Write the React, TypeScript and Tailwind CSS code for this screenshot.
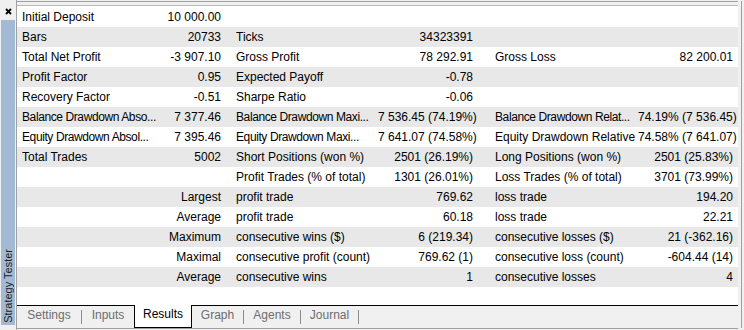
type Pair = [string, string];

type Row = {
  a?: Pair;
  sub?: string;
  b?: Pair;
  c?: Pair;
};

const rows: Row[] = [
  { a: ["Initial Deposit", "10 000.00"] },
  { a: ["Bars", "20733"], b: ["Ticks", "34323391"] },
  { a: ["Total Net Profit", "-3 907.10"], b: ["Gross Profit", "78 292.91"], c: ["Gross Loss", "82 200.01"] },
  { a: ["Profit Factor", "0.95"], b: ["Expected Payoff", "-0.78"] },
  { a: ["Recovery Factor", "-0.51"], b: ["Sharpe Ratio", "-0.06"] },
  {
    a: ["Balance Drawdown Abso...", "7 377.46"],
    b: ["Balance Drawdown Maxi...", "7 536.45 (74.19%)"],
    c: ["Balance Drawdown Relat...", "74.19% (7 536.45)"],
  },
  {
    a: ["Equity Drawdown Absol...", "7 395.46"],
    b: ["Equity Drawdown Maxi...", "7 641.07 (74.58%)"],
    c: ["Equity Drawdown Relative", "74.58% (7 641.07)"],
  },
  {
    a: ["Total Trades", "5002"],
    b: ["Short Positions (won %)", "2501 (26.19%)"],
    c: ["Long Positions (won %)", "2501 (25.83%)"],
  },
  { b: ["Profit Trades (% of total)", "1301 (26.01%)"], c: ["Loss Trades (% of total)", "3701 (73.99%)"] },
  { sub: "Largest", b: ["profit trade", "769.62"], c: ["loss trade", "194.20"] },
  { sub: "Average", b: ["profit trade", "60.18"], c: ["loss trade", "22.21"] },
  { sub: "Maximum", b: ["consecutive wins ($)", "6 (219.34)"], c: ["consecutive losses ($)", "21 (-362.16)"] },
  { sub: "Maximal", b: ["consecutive profit (count)", "769.62 (1)"], c: ["consecutive loss (count)", "-604.44 (14)"] },
  { sub: "Average", b: ["consecutive wins", "1"], c: ["consecutive losses", "4"] },
];

function Cells({ p }: { p?: Pair }) {
  // labels the terminal cut short are a bit too wide in Liberation Sans
  const cut = p?.[0].endsWith("...");
  return (
    <>
      <div className={`overflow-hidden whitespace-nowrap ${cut ? "tracking-[-0.4px]" : ""}`}>{p?.[0]}</div>
      <div className="whitespace-nowrap text-right">{p?.[1]}</div>
    </>
  );
}

function StatRow({ r, odd }: { r: Row; odd: boolean }) {
  return (
    <div
      className={`grid h-5 grid-cols-[145px_54px_15px_142px_95px_22px_143px_95px] px-[5px] leading-5 ${
        odd ? "bg-[#e8e8e8]" : "bg-white"
      }`}
    >
      {r.sub ? <div className="col-span-2 text-right">{r.sub}</div> : <Cells p={r.a} />}
      <div />
      <Cells p={r.b} />
      <div />
      <Cells p={r.c} />
    </div>
  );
}

function Sep() {
  return <div className="h-[14px] w-px self-center bg-[#8c8c8c]" />;
}

export default function App() {
  return (
    <div className="flex h-[330px] w-[744px] bg-[#f0f0f0] font-['Liberation_Sans',Arial,sans-serif] text-[12px] text-black">
      {/* side strip */}
      <div className="flex w-4 flex-col">
        <div className="h-5 pl-[5px] pt-[8px]">
          <svg width="7" height="7" viewBox="0 0 7 7">
            <path d="M1 1L6 6M6 1L1 6" stroke="#000" strokeWidth="1.8" />
          </svg>
        </div>
        <div className="mb-[5px] ml-px flex w-[14px] flex-1 flex-col items-center justify-end bg-[#a3bad5] pb-[2px]">
          <span className="rotate-180 text-[11px] leading-[14px] text-[#1c1c1c] [writing-mode:vertical-rl]">
            Strategy Tester
          </span>
        </div>
      </div>

      {/* main panel */}
      <div className="flex flex-1 flex-col border-l border-[#a0a0a0]">
        <div className="h-px" />
        <div className="h-px bg-[#a0a0a0]" />
        <div className="h-[3px]" />
        <div className="h-px bg-[#b8b8b8]" />

        <div className="flex-1 bg-white pt-px">
          {rows.map((r, i) => (
            <StatRow key={i} r={r} odd={i % 2 === 1} />
          ))}
        </div>

        <div className="flex h-[23px] border-t border-black leading-[18px] text-[#6d6d6d]">
          <div className="w-[64px] text-center">Settings</div>
          <Sep />
          <div className="w-[52px] text-center">Inputs</div>
          <div className="-mt-px h-[23px] w-[58px] border-x border-b border-black bg-white text-center leading-[19px] text-black">
            Results
          </div>
          <div className="w-[51px] text-center">Graph</div>
          <Sep />
          <div className="w-[56px] text-center">Agents</div>
          <Sep />
          <div className="w-[57px] text-center">Journal</div>
          <Sep />
        </div>
        <div className="h-px bg-[#a0a0a0]" />
        <div className="h-px" />
      </div>

      {/* right gutter */}
      <div className="flex w-[6px] pl-[3px] pt-[1px] pb-[2px]">
        <div className="w-px bg-[#a0a0a0]" />
      </div>
    </div>
  );
}
